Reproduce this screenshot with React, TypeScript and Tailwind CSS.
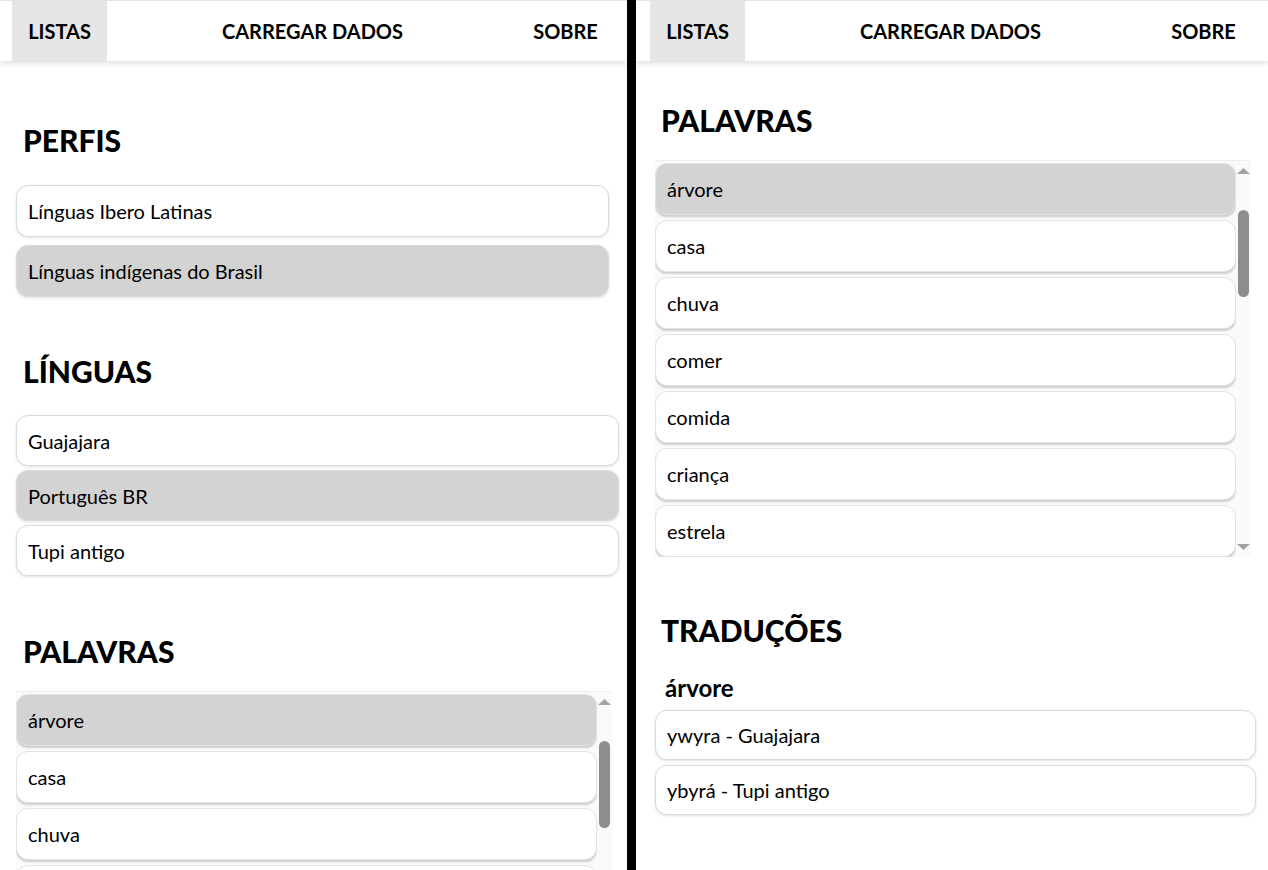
import React, { useEffect, useRef } from "react";

const FONT = { fontFamily: "Lato, 'Noto Sans', sans-serif" };

const WORDS = [
  "abelha", "água", "animal", "árvore", "casa", "chuva", "comer", "comida", "criança", "estrela",
  "flor", "fogo", "folha", "gente", "homem", "lua", "mãe", "mão", "mar", "mulher",
  "noite", "olho", "pai", "peixe", "pedra", "rio", "sol", "terra", "vento",
];

function Nav({ pad }: { pad: string }) {
  return (
    <div className={`h-[61px] shrink-0 bg-white border-t border-[#e3e3e3] shadow-[0_2px_6px_rgba(0,0,0,0.14)] flex items-stretch justify-between ${pad} relative z-10`}>
      <div className="bg-[#e6e6e6] w-[95px] flex items-center justify-center text-[20px] font-bold text-black uppercase">Listas</div>
      <div className="w-[214px] flex items-center justify-center text-[20px] font-bold text-black uppercase">Carregar dados</div>
      <div className="w-[95px] flex items-center justify-center text-[20px] font-bold text-black uppercase">Sobre</div>
    </div>
  );
}

function Heading({ children, className = "" }: { children: React.ReactNode; className?: string }) {
  return <h2 className={`text-[30px] leading-[38px] font-black text-black ${className}`}>{children}</h2>;
}

function Box({ label, selected, h }: { label: string; selected?: boolean; h: string }) {
  return (
    <div
      className={`${h} rounded-[12px] border border-[#dadada] shadow-[0_1px_3px_rgba(0,0,0,0.12)] flex items-center pl-[11px] text-[20px] text-black ${selected ? "bg-[#d3d3d3]" : "bg-white"}`}
    >
      {label}
    </div>
  );
}

function WordList({ className = "" }: { className?: string }) {
  const ref = useRef<HTMLDivElement>(null);
  useEffect(() => {
    if (ref.current) ref.current.scrollTop = 171;
  }, []);
  return (
    <div className={`h-[397px] flex bg-[#fafafa] border-t border-[#efefef] shrink-0 ${className}`}>
      <div ref={ref} className="flex-1 overflow-hidden">
        <div className="flex flex-col gap-[5px] pt-[2px] pb-[3px]">
          {WORDS.map((w) => (
            <div
              key={w}
              className={`h-[52px] shrink-0 rounded-[12px] border border-[#e2e2e2] shadow-[0_2px_2px_rgba(0,0,0,0.18)] flex items-center pl-[11px] text-[20px] text-black ${w === "árvore" ? "bg-[#d3d3d3]" : "bg-white"}`}
            >
              {w}
            </div>
          ))}
        </div>
      </div>
      <div className="w-[15px] shrink-0 flex flex-col items-center bg-[#fafafa]">
        <svg width="13" height="6" viewBox="0 0 13 6" className="mt-[7px] shrink-0">
          <polygon points="6.5,0 13,6 0,6" fill="#a3a3a3" />
        </svg>
        <div className="mt-[36px] w-[11px] h-[87px] rounded-full bg-[#8d8d8d] shrink-0" />
        <div className="flex-1" />
        <svg width="13" height="6" viewBox="0 0 13 6" className="mb-[7px] shrink-0">
          <polygon points="0,0 13,0 6.5,6" fill="#a3a3a3" />
        </svg>
      </div>
    </div>
  );
}

export default function App() {
  return (
    <div className="w-[1268px] h-[870px] flex overflow-hidden bg-white" style={FONT}>
      {/* Left panel */}
      <div className="w-[627px] shrink-0 flex flex-col overflow-hidden">
        <Nav pad="pl-[12px] pr-[14px]" />
        <div className="flex flex-col pl-[16px]">
          <Heading className="mt-[60px] pl-[7px]">PERFIS</Heading>
          <div className="mt-[26px] w-[593px] flex flex-col gap-[8px]">
            <Box h="h-[52px]" label="Línguas Ibero Latinas" />
            <Box h="h-[52px]" label="Línguas indígenas do Brasil" selected />
          </div>
          <Heading className="mt-[55px] pl-[7px]">LÍNGUAS</Heading>
          <div className="mt-[25px] w-[603px] flex flex-col gap-[4px]">
            <Box h="h-[51px]" label="Guajajara" />
            <Box h="h-[51px]" label="Português BR" selected />
            <Box h="h-[51px]" label="Tupi antigo" />
          </div>
          <Heading className="mt-[56px] pl-[7px]">PALAVRAS</Heading>
          <WordList className="mt-[21px] w-[596px]" />
        </div>
      </div>

      {/* Divider */}
      <div className="w-[9px] shrink-0 bg-black" />

      {/* Right panel */}
      <div className="flex-1 flex flex-col overflow-hidden">
        <Nav pad="pl-[14px] pr-[17px]" />
        <div className="flex flex-col pl-[19px] pr-[12px]">
          <Heading className="mt-[40px] pl-[6px]">PALAVRAS</Heading>
          <WordList className="mt-[21px] w-[596px]" />
          <Heading className="mt-[54px] pl-[6px]">TRADUÇÕES</Heading>
          <div className="mt-[26px] pl-[10px] text-[24px] font-bold text-black leading-[26px]">árvore</div>
          <div className="mt-[9px] flex flex-col gap-[5px]">
            <Box h="h-[50px]" label="ywyra - Guajajara" />
            <Box h="h-[50px]" label="ybyrá - Tupi antigo" />
          </div>
        </div>
      </div>
    </div>
  );
}
